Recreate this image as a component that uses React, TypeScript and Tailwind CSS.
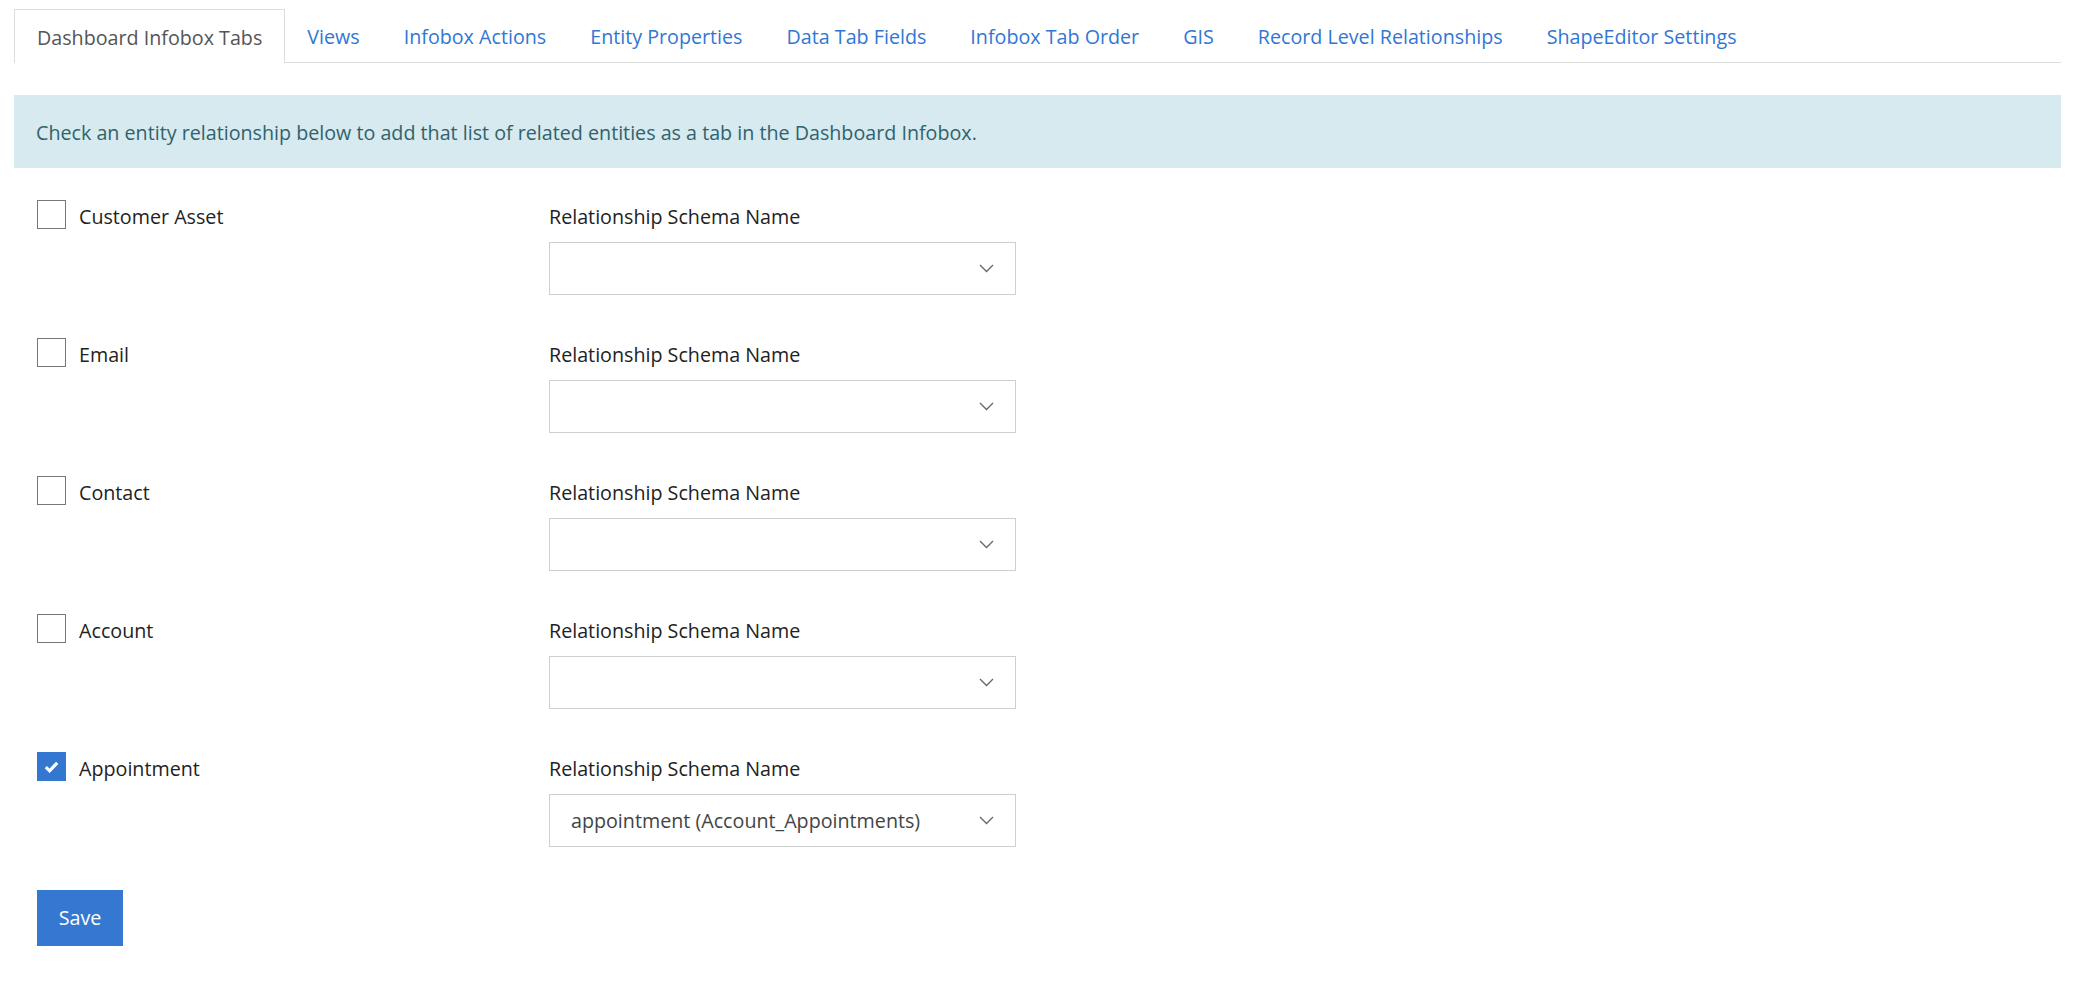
import React, { useState } from "react";

const font = { fontFamily: '"Open Sans", "Noto Sans", sans-serif' };

const tabs = [
  "Dashboard Infobox Tabs",
  "Views",
  "Infobox Actions",
  "Entity Properties",
  "Data Tab Fields",
  "Infobox Tab Order",
  "GIS",
  "Record Level Relationships",
  "ShapeEditor Settings",
];

const initialRows = [
  { name: "Customer Asset", checked: false, value: "" },
  { name: "Email", checked: false, value: "" },
  { name: "Contact", checked: false, value: "" },
  { name: "Account", checked: false, value: "" },
  { name: "Appointment", checked: true, value: "appointment (Account_Appointments)" },
];

const Chevron = () => (
  <svg width="15" height="9" viewBox="0 0 15 9" fill="none">
    <path d="M1 1l6.5 6.5L14 1" stroke="#666" strokeWidth="1.3" />
  </svg>
);

const Checkbox = ({ checked, onClick }: { checked: boolean; onClick: () => void }) =>
  checked ? (
    <button
      onClick={onClick}
      className="flex h-[29px] w-[29px] shrink-0 items-center justify-center bg-[#3377d1]"
    >
      <svg width="15" height="12" viewBox="0 0 15 12" fill="none">
        <path d="M1.8 6.2l3.8 3.6L13.2 1.8" stroke="white" strokeWidth="3.2" />
      </svg>
    </button>
  ) : (
    <button
      onClick={onClick}
      className="h-[29px] w-[29px] shrink-0 border-[1.5px] border-[#777] bg-white"
    />
  );

export default function App() {
  const [rows, setRows] = useState(initialRows);

  const toggle = (i: number) =>
    setRows(rows.map((r, j) => (j === i ? { ...r, checked: !r.checked } : r)));

  return (
    <div style={font} className="min-h-screen bg-white pl-[14px] pr-[31px] pt-[9px] text-[19.7px]">
      {/* tabs */}
      <div className="flex border-b border-[#dcdcdc]">
        {tabs.map((t, i) => (
          <div
            key={t}
            className={
              i === 0
                ? "-mb-px flex h-[54px] items-center border border-b-0 border-[#dcdcdc] bg-white px-[22px] pt-[3px] text-[#555]"
                : "flex h-[53px] items-center px-[22px] pt-[3px] text-[#3077d3]"
            }
          >
            {t}
          </div>
        ))}
      </div>

      {/* info banner */}
      <div className="mt-[32px] flex h-[73px] items-center bg-[#d6eaf0] px-[22px] pt-[2px] text-[#31626b]">
        Check an entity relationship below to add that list of related entities as a tab in the Dashboard Infobox.
      </div>

      {/* relationship rows */}
      <div className="mt-[32px] flex flex-col gap-[43px]">
        {rows.map((r, i) => (
          <div key={r.name} className="flex">
            <div className="flex h-[29px] w-[535px] items-center gap-[13px] pl-[23px] text-[#222]">
              <Checkbox checked={r.checked} onClick={() => toggle(i)} />
              <span className="pt-[4px]">{r.name}</span>
            </div>
            <div className="flex flex-col">
              <div className="h-[29px] pt-[2px] leading-[29px] text-[#222]">Relationship Schema Name</div>
              <div className="mt-[13px] flex h-[53px] w-[467px] items-center justify-between border border-[#cfcfcf] bg-white pl-[21px] pr-[21px] text-[#444]">
                <span>{r.value}</span>
                <Chevron />
              </div>
            </div>
          </div>
        ))}
      </div>

      <button className="ml-[23px] mt-[43px] flex h-[56px] w-[86px] items-center justify-center bg-[#3478d1] text-white">
        Save
      </button>
    </div>
  );
}
